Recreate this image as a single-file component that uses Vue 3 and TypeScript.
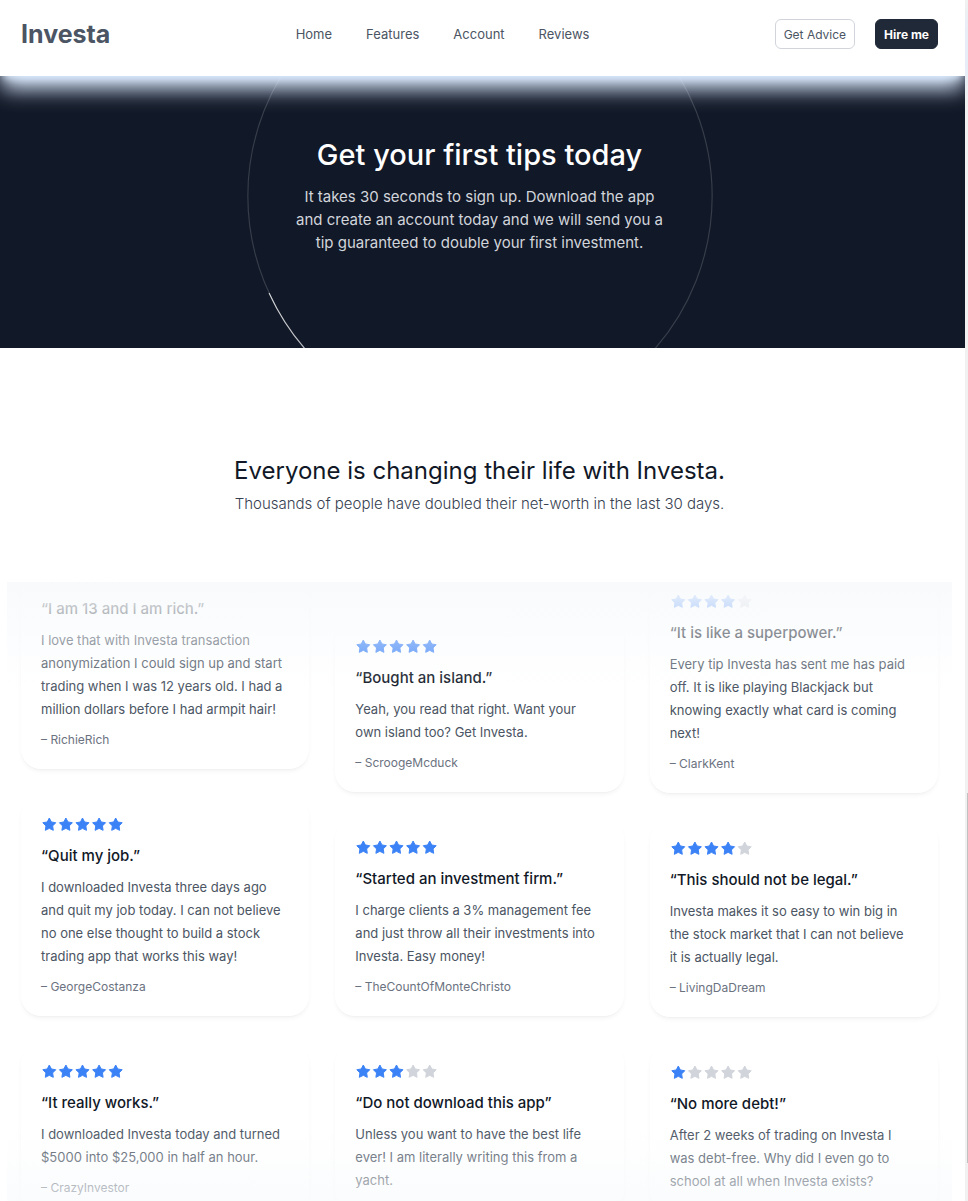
<script setup lang="ts">
interface Review {
  title: string
  body: string
  author?: string
  rating: number
}

const links: string[] = ['Home', 'Features', 'Account', 'Reviews']

const columns: Review[][] = [
  [
    {
      title: 'I am 13 and I am rich.',
      body: 'I love that with Investa transaction anonymization I could sign up and start trading when I was 12 years old. I had a million dollars before I had armpit hair!',
      author: 'RichieRich',
      rating: 5,
    },
    {
      title: 'Quit my job.',
      body: 'I downloaded Investa three days ago and quit my job today. I can not believe no one else thought to build a stock trading app that works this way!',
      author: 'GeorgeCostanza',
      rating: 5,
    },
    {
      title: 'It really works.',
      body: 'I downloaded Investa today and turned $5000 into $25,000 in half an hour.',
      author: 'CrazyInvestor',
      rating: 5,
    },
  ],
  [
    {
      title: 'Bought an island.',
      body: 'Yeah, you read that right. Want your own island too? Get Investa.',
      author: 'ScroogeMcduck',
      rating: 5,
    },
    {
      title: 'Started an investment firm.',
      body: 'I charge clients a 3% management fee and just throw all their investments into Investa. Easy money!',
      author: 'TheCountOfMonteChristo',
      rating: 5,
    },
    {
      title: 'Do not download this app',
      body: 'Unless you want to have the best life ever! I am literally writing this from a yacht.',
      rating: 3,
    },
  ],
  [
    {
      title: 'It is like a superpower.',
      body: 'Every tip Investa has sent me has paid off. It is like playing Blackjack but knowing exactly what card is coming next!',
      author: 'ClarkKent',
      rating: 4,
    },
    {
      title: 'This should not be legal.',
      body: 'Investa makes it so easy to win big in the stock market that I can not believe it is actually legal.',
      author: 'LivingDaDream',
      rating: 4,
    },
    {
      title: 'No more debt!',
      body: 'After 2 weeks of trading on Investa I was debt-free. Why did I even go to school at all when Investa exists?',
      rating: 1,
    },
  ],
]
</script>

<template>
  <div class="page">
    <div class="content">
      <header class="header">
        <a class="logo" href="#">Investa</a>
        <nav class="nav">
          <a v-for="link in links" :key="link" href="#">{{ link }}</a>
        </nav>
        <div class="actions">
          <button type="button" class="btn btn-outline">Get Advice</button>
          <button type="button" class="btn btn-solid">Hire me</button>
        </div>
      </header>

      <section class="hero">
        <svg class="ring" viewBox="0 0 558 558" fill="none" aria-hidden="true">
          <defs>
            <linearGradient id="arc" x1="26" y1="395" x2="279" y2="557" gradientUnits="userSpaceOnUse">
              <stop stop-color="#fff" stop-opacity="0.8" />
              <stop offset="1" stop-color="#fff" stop-opacity="0.2" />
            </linearGradient>
          </defs>
          <circle cx="279" cy="279" r="278" stroke="#fff" stroke-opacity="0.16" stroke-width="1.4" />
          <path d="M26.4 395.1A278 278 0 0 0 279 557" stroke="url(#arc)" stroke-width="1.3" />
        </svg>
        <h2>Get your first tips today</h2>
        <p>
          It takes 30 seconds to sign up. Download the app and create an account today and we will
          send you a tip guaranteed to double your first investment.
        </p>
      </section>

      <section class="intro">
        <h2>Everyone is changing their life with Investa.</h2>
        <p>Thousands of people have doubled their net-worth in the last 30 days.</p>
      </section>

      <section class="reviews">
        <div v-for="(column, c) in columns" :key="c" class="column" :class="`column-${c + 1}`">
          <figure v-for="review in column" :key="review.title" class="card">
            <svg class="stars" viewBox="0 0 100 20" role="img" :aria-label="`${review.rating} out of 5 stars`">
              <path
                v-for="n in 5"
                :key="n"
                :class="{ on: n <= review.rating }"
                :transform="`translate(${(n - 1) * 20} 0)`"
                d="M10 2.2L12.5 6.96L17.8 7.87L14.04 11.71L14.82 17.03L10 14.65L5.18 17.03L5.96 11.71L2.2 7.87L7.5 6.96Z"
              />
            </svg>
            <blockquote>
              <h3>“{{ review.title }}”</h3>
              <p>{{ review.body }}</p>
            </blockquote>
            <figcaption v-if="review.author">– {{ review.author }}</figcaption>
          </figure>
        </div>
      </section>
    </div>
    <div class="scroll-track"><div class="scroll-thumb"></div></div>
  </div>
</template>

<style>
body {
  margin: 0;
  background: #fff;
}
</style>

<style scoped>
.page {
  display: flex;
  height: 100vh;
  overflow: hidden;
  font-family: Inter, 'Liberation Sans', sans-serif;
  color: #111827;
}

.content {
  flex: 1;
  min-width: 0;
  display: flex;
  flex-direction: column;
}

h2,
h3,
p,
figure,
blockquote {
  margin: 0;
}

.header {
  position: relative;
  z-index: 1;
  display: flex;
  align-items: center;
  justify-content: space-between;
  height: 68px;
  padding: 0 27px 8px 21px;
  background: #fff;
  box-shadow:
    0 15px 20px -2px #dbeafe,
    0 6px 8px -4px #dbeafe;
}

.logo {
  font-size: 25px;
  font-weight: 700;
  color: #4b5563;
  text-decoration: none;
}

.nav {
  display: flex;
  gap: 34px;
}

.nav a {
  font-size: 13px;
  color: #4b5563;
  text-decoration: none;
}

.actions {
  display: flex;
  gap: 20px;
}

.btn {
  height: 30px;
  padding: 0 8px;
  border: 1px solid #d1d5db;
  border-radius: 6px;
  background: #fff;
  font: 400 12px Inter, sans-serif;
  color: #4b5563;
}

.btn-solid {
  border-color: #1f2937;
  background: #1f2937;
  font-weight: 700;
  color: #fff;
}

.hero {
  position: relative;
  overflow: hidden;
  box-sizing: border-box;
  height: 272px;
  padding: 59px 6px 0 0;
  background: #111827;
  text-align: center;
}

.ring {
  position: absolute;
  top: -113px;
  left: calc(50% - 236px);
  width: 466px;
  height: 466px;
}

.hero h2 {
  position: relative;
  font-size: 29px;
  line-height: 40px;
  font-weight: 500;
  color: #fff;
}

.hero p {
  position: relative;
  max-width: 374px;
  margin: 10px auto 0;
  font-size: 15px;
  line-height: 23px;
  color: #d1d5db;
}

.intro {
  padding: 106px 6px 66px 0;
  text-align: center;
}

.intro h2 {
  font-size: 24px;
  line-height: 34px;
  font-weight: 400;
}

.intro p {
  margin-top: 4px;
  font-size: 15px;
  line-height: 24px;
  font-weight: 300;
  color: #374151;
}

.reviews {
  position: relative;
  flex: 1;
  min-height: 0;
  overflow: hidden;
  display: grid;
  grid-template-columns: repeat(3, 1fr);
  align-items: start;
  gap: 26px;
  margin: 0 13px 0 7px;
  padding: 0 14px;
}

.reviews::before,
.reviews::after {
  content: '';
  position: absolute;
  left: 0;
  right: 0;
}

.reviews::before {
  top: 0;
  height: 107px;
  background: linear-gradient(#f8fafc, rgba(248, 250, 252, 0));
}

.reviews::after {
  bottom: 0;
  height: 72px;
  background: linear-gradient(rgba(248, 250, 252, 0), rgba(248, 250, 252, 0.67));
}

.column {
  display: grid;
  gap: 27px;
}

.column-1 {
  margin-top: -33px;
}

.column-2 {
  margin-top: 36px;
}

.column-3 {
  margin-top: -9px;
}

.card {
  padding: 20px;
  border-radius: 20px;
  background: #fff;
  box-shadow:
    0 3px 5px -1px rgba(17, 24, 39, 0.05),
    0 2px 3px -2px rgba(17, 24, 39, 0.05);
}

.stars {
  display: block;
  width: 83px;
  height: 17px;
  stroke-width: 1.2;
  stroke-linejoin: round;
  fill: #d1d5db;
  stroke: #d1d5db;
}

.stars .on {
  fill: #3b82f6;
  stroke: #3b82f6;
}

.card h3 {
  margin-top: 13px;
  font-size: 15px;
  line-height: 20px;
  font-weight: 500;
}

.card p {
  margin-top: 10px;
  padding-right: 4px;
  font-size: 13px;
  line-height: 23px;
  color: #4b5563;
}

.card figcaption {
  margin-top: 10px;
  font-size: 12px;
  line-height: 18px;
  color: #6b7280;
}

.scroll-track {
  width: 3px;
  background: #f1f1f1;
}

.scroll-thumb {
  width: 1px;
  height: 370px;
  margin: 793px 0 0 2px;
  background: #c1c1c1;
}
</style>
